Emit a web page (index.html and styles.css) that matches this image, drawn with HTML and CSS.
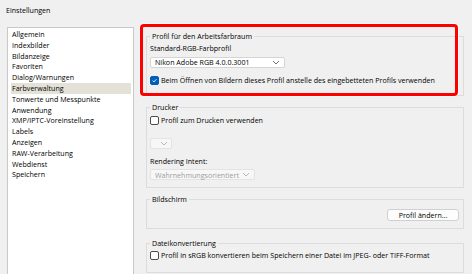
FILE: index.html
```html
<!DOCTYPE html>
<html lang="de">
<head>
    <meta charset="UTF-8">
    <title>Einstellungen</title>
    <link rel="stylesheet" href="styles.css">
</head>
<body>
    <div class="window">
        <div class="title-bar">Einstellungen</div>

        <div class="main">
            <ul class="nav">
                <li>Allgemein</li>
                <li>Indexbilder</li>
                <li>Bildanzeige</li>
                <li>Favoriten</li>
                <li>Dialog/Warnungen</li>
                <li class="active">Farbverwaltung</li>
                <li>Tonwerte und Messpunkte</li>
                <li>Anwendung</li>
                <li>XMP/IPTC-Voreinstellung</li>
                <li>Labels</li>
                <li>Anzeigen</li>
                <li>RAW-Verarbeitung</li>
                <li>Webdienst</li>
                <li>Speichern</li>
            </ul>

            <div class="pane">
                <fieldset class="group group-profile">
                    <legend>Profil für den Arbeitsfarbraum</legend>
                    <div class="label">Standard-RGB-Farbprofil</div>
                    <div class="select select-wide">
                        <span>Nikon Adobe RGB 4.0.0.3001</span>
                        <svg class="chevron" width="8" height="5" viewBox="0 0 8 5"><polyline points="1,1 4,4 7,1" fill="none" stroke="#606060" stroke-width="0.9"/></svg>
                    </div>
                    <div class="check">
                        <span class="box checked">
                            <svg width="9" height="9" viewBox="0 0 9 9"><polyline points="2,4.6 3.8,6.4 7,2.8" fill="none" stroke="#fff" stroke-width="1.1"/></svg>
                        </span>
                        Beim Öffnen von Bildern dieses Profil anstelle des eingebetteten Profils verwenden
                    </div>
                </fieldset>

                <fieldset class="group group-printer">
                    <legend>Drucker</legend>
                    <div class="check"><span class="box"></span>Profil zum Drucken verwenden</div>
                    <div class="select select-tiny disabled">
                        <span></span>
                        <svg class="chevron" width="8" height="5" viewBox="0 0 8 5"><polyline points="1,1 4,4 7,1" fill="none" stroke="#b0b0b0" stroke-width="0.9"/></svg>
                    </div>
                    <div class="label label-intent">Rendering Intent:</div>
                    <div class="select select-intent disabled">
                        <span>Wahrnehmungsorientiert</span>
                        <svg class="chevron" width="8" height="5" viewBox="0 0 8 5"><polyline points="1,1 4,4 7,1" fill="none" stroke="#b0b0b0" stroke-width="0.9"/></svg>
                    </div>
                </fieldset>

                <fieldset class="group group-screen">
                    <legend>Bildschirm</legend>
                    <div class="actions">
                        <button class="button">Profil ändern...</button>
                    </div>
                </fieldset>

                <fieldset class="group group-convert">
                    <legend>Dateikonvertierung</legend>
                    <div class="check"><span class="box"></span>Profil in sRGB konvertieren beim Speichern einer Datei im JPEG- oder TIFF-Format</div>
                </fieldset>
            </div>
        </div>

        <!-- annotation frame drawn over the first group -->
        <div class="marker"></div>
    </div>
</body>
</html>
```

FILE: styles.css
```css
* {
    box-sizing: border-box;
}

body {
    margin: 0;
    background-color: #f0f0f0;
    font-family: 'Open Sans', 'Noto Sans', sans-serif;
    font-size: 7.1px;
    color: #000;
    overflow: hidden;
}

.window {
    position: relative;
    width: 472px;
    height: 274px;
    overflow: hidden;
}

.title-bar {
    height: 21px;
    line-height: 20px;
    padding-left: 6px;
}

.main {
    display: flex;
    gap: 12px;
    padding: 6px 8px 0 7px;
}

/* left category list */
.nav {
    list-style: none;
    margin: 0;
    padding: 1px 2px 0 3px;
    width: 127px;
    height: 260px;
    flex-shrink: 0;
    background-color: white;
    border: 1px solid #c9c9c9;
}

.nav li {
    height: 10.8px;
    line-height: 10.8px;
    padding-left: 1px;
    white-space: nowrap;
}

.nav li.active {
    background-color: #e4e2d8;
}

/* right side */
.pane {
    flex: 1;
    display: flex;
    flex-direction: column;
    gap: 6px;
    padding-top: 4px;
}

.group {
    margin: 0;
    min-width: 0;
    border: 1px solid #dcdcdc;
    padding: 0 4px 7px 3px;
}

.group legend {
    padding: 0 2px;
    line-height: 11px;
}

.group-profile {
    padding-bottom: 9px;
}

.label {
    line-height: 11px;
    margin-top: 1px;
}

.select {
    display: flex;
    align-items: center;
    justify-content: space-between;
    height: 11px;
    margin-top: 2px;
    padding: 0 4px 0 4px;
    background-color: white;
    border: 1px solid #d5d5d5;
    border-radius: 2px;
    white-space: nowrap;
}

.select-wide {
    width: 135px;
    margin-top: 2.5px;
}

.select-tiny {
    width: 22px;
    margin-top: 12px;
    padding-right: 3px;
}

.select-intent {
    width: 105px;
}

.select.disabled {
    background-color: #f7f7f7;
    border-color: #e3e3e3;
    color: #9d9d9d;
}

.check {
    display: flex;
    align-items: center;
    gap: 2px;
    line-height: 11px;
    white-space: nowrap;
}

.group-profile .check {
    margin-top: 7.5px;
}

.group-printer .check {
    margin-top: 2px;
}

.group-convert .check {
    margin-top: 1px;
}

.box {
    width: 9px;
    height: 9px;
    flex-shrink: 0;
    background-color: white;
    border: 1px solid #4a4a4a;
    border-radius: 2px;
}

.box.checked {
    background-color: #005fb8;
    border-color: #005fb8;
    display: flex;
    align-items: center;
    justify-content: center;
}

.box.checked svg {
    display: block;
}

.label-intent {
    margin-top: 7px;
}

.actions {
    display: flex;
    justify-content: flex-end;
    margin-top: 3.5px;
}

.button {
    width: 72px;
    height: 12px;
    padding: 0;
    font-family: inherit;
    font-size: 7.1px;
    line-height: 10px;
    color: #000;
    background-color: #fdfdfd;
    border: 1px solid #d0d0d0;
    border-radius: 3px;
}

.group-convert {
    margin-top: 3px;
    padding-bottom: 11px;
}

/* red annotation frame */
.marker {
    position: absolute;
    left: 140px;
    top: 24px;
    width: 318px;
    height: 72px;
    border: 3px solid #ff0000;
    border-radius: 4px;
    box-shadow: 0 0 0 1px rgba(255, 255, 255, 0.7);
}
```
